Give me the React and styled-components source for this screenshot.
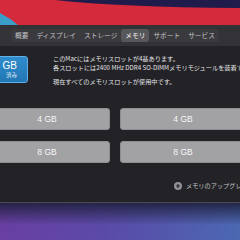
import React from 'react';
import styled, { createGlobalStyle } from 'styled-components';

const GlobalStyle = createGlobalStyle`
  html, body {
    margin: 0;
    padding: 0;
    background: #232327;
  }
  body {
    width: 240px;
    height: 240px;
    overflow: hidden;
    font-family: "Noto Sans CJK JP", "Noto Sans", sans-serif;
  }
`;

const Page = styled.div`
  display: flex;
  flex-direction: column;
  width: 240px;
  height: 240px;
  overflow: hidden;
`;

const TopWall = styled.svg`
  display: block;
  width: 240px;
  height: 25px;
  flex: none;
`;

const Window = styled.div`
  display: flex;
  flex-direction: column;
  flex: none;
  overflow: hidden;
`;

const Toolbar = styled.div`
  height: 21px;
  background: #333337;
  display: flex;
  align-items: center;
  padding-left: 11px;
`;

const TabGroup = styled.div`
  display: flex;
  align-items: center;
  height: 13px;
  background: #3a3a3e;
  border-radius: 3px;
`;

const Tab = styled.div`
  height: 13px;
  padding: 0 4px;
  display: flex;
  align-items: center;
  font-size: 6.7px;
  line-height: 1;
  color: ${p => (p.active ? '#f4f4f4' : '#c4c4c7')};
  background: ${p => (p.active ? '#57575b' : 'transparent')};
  border-radius: 3px;
  white-space: nowrap;
`;

const Content = styled.div`
  height: 156px;
  background: #232327;
  border-bottom: 1px solid #4a4a50;
  display: flex;
  flex-direction: column;
`;

const Info = styled.div`
  display: flex;
  padding-top: 9px;
  height: 40px;
`;

const Summary = styled.div`
  flex: none;
  width: 40px;
  height: 27px;
  margin-left: -12px;
  margin-top: 1px;
  box-sizing: border-box;
  border: 1px solid #62b0e8;
  border-radius: 3px;
  background: linear-gradient(#2f8ccc, #2277b4);
  display: flex;
  flex-direction: column;
  align-items: flex-end;
  justify-content: center;
  padding-right: 10px;
  color: #ffffff;
`;

const Big = styled.div`
  font-family: "Liberation Sans", "Noto Sans", sans-serif;
  font-size: 10px;
  line-height: 11px;
`;

const Small = styled.div`
  font-size: 5.5px;
  line-height: 8px;
  color: #e4eef8;
`;

const Lines = styled.div`
  margin-left: 25px;
  display: flex;
  flex-direction: column;
  font-size: 6.2px;
  line-height: 8.5px;
  color: #e2e2e4;
  white-space: nowrap;
`;

const Line = styled.div`
  margin-top: ${p => p.gap || 0}px;
`;

const Slots = styled.div`
  display: grid;
  grid-template-columns: 126px 126px;
  gap: 11px 10px;
  margin-left: -16px;
  margin-top: 13px;
`;

const Slot = styled.div`
  height: 22px;
  box-sizing: border-box;
  border: 1px solid #8e8e92;
  border-radius: 3px;
  background: #a2a2a4;
  display: flex;
  align-items: center;
  justify-content: center;
  font-family: "Liberation Sans", "Noto Sans", sans-serif;
  font-size: 8.5px;
  color: #f6f6f6;
`;

const Footer = styled.div`
  display: flex;
  align-items: center;
  margin-top: 18px;
  padding-left: 174px;
  white-space: nowrap;
`;

const Plus = styled.svg`
  width: 8px;
  height: 8px;
  flex: none;
  margin-right: 4px;
`;

const LinkText = styled.span`
  font-size: 6.2px;
  color: #c4c4c6;
`;

const BottomWall = styled.div`
  flex: 1;
  background:
    linear-gradient(180deg, rgba(30, 32, 60, 0.9) 0%, rgba(30, 32, 60, 0) 60%),
    linear-gradient(100deg, #6a3ea2 0%, #5a4aa8 45%, #4b69b2 100%);
`;

const tabs = ['概要', 'ディスプレイ', 'ストレージ', 'メモリ', 'サポート', 'サービス'];
const slots = ['4 GB', '4 GB', '8 GB', '8 GB'];

export default function App() {
  return (
    <Page>
      <GlobalStyle />
      <TopWall viewBox="0 0 240 25" preserveAspectRatio="none">
        <rect width="240" height="25" fill="#d42a3c" />
        <path d="M55 0 Q120 7 240 8 L240 0 Z" fill="#1f1b4a" />
        <path d="M0 13 Q10 18 18 25 L0 25 Z" fill="#3a9ec8" />
      </TopWall>
      <Window>
        <Toolbar>
          <TabGroup>
            {tabs.map(t => (
              <Tab key={t} active={t === 'メモリ'}>{t}</Tab>
            ))}
          </TabGroup>
        </Toolbar>
        <Content>
          <Info>
            <Summary>
              <Big>GB</Big>
              <Small>済み</Small>
            </Summary>
            <Lines>
              <Line>このMacにはメモリスロットが4基あります。</Line>
              <Line>各スロットには2400 MHz DDR4 SO-DIMMメモリモジュールを装着できます。</Line>
              <Line gap={6}>現在すべてのメモリスロットが使用中です。</Line>
            </Lines>
          </Info>
          <Slots>
            {slots.map((s, i) => (
              <Slot key={i}>{s}</Slot>
            ))}
          </Slots>
          <Footer>
            <Plus viewBox="0 0 8 8">
              <circle cx="4" cy="4" r="4" fill="#929296" />
              <path d="M4 2 V6 M2 4 H6" stroke="#2a2a2e" strokeWidth="1.2" />
            </Plus>
            <LinkText>メモリのアップグレードの手順</LinkText>
          </Footer>
        </Content>
      </Window>
      <BottomWall />
    </Page>
  );
}
